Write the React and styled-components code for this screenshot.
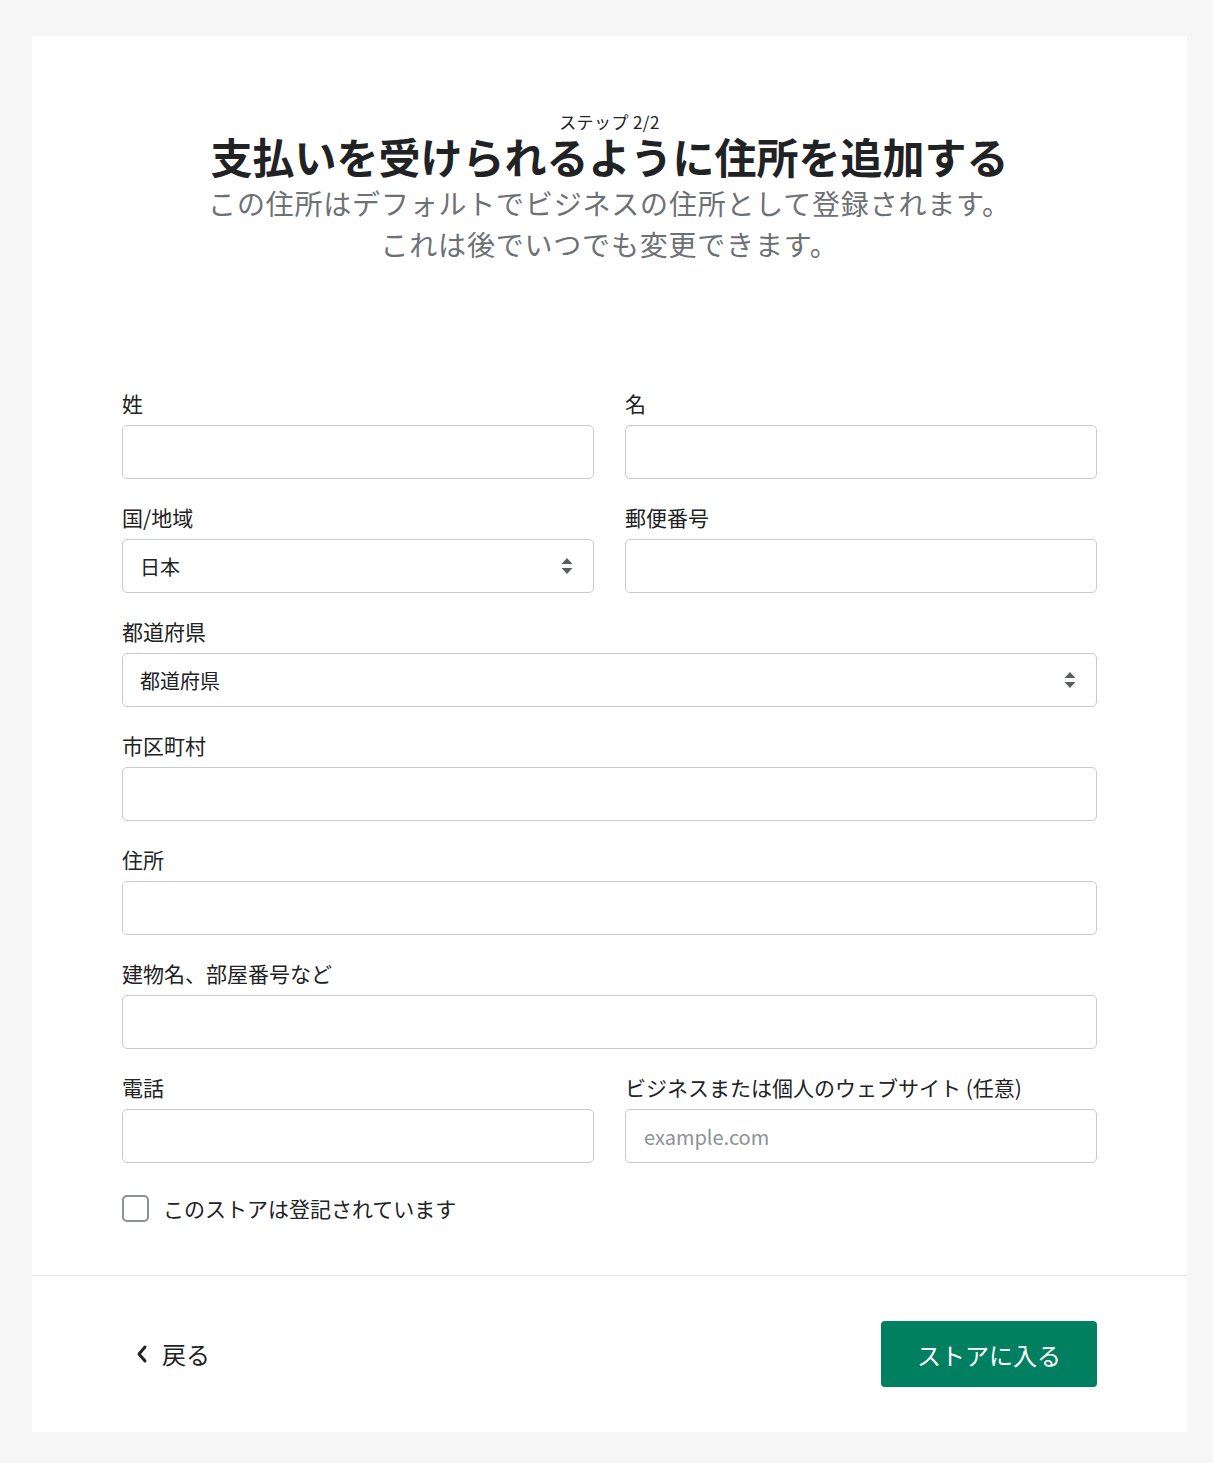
import React from "react";
import styled, { createGlobalStyle } from "styled-components";

const GlobalStyle = createGlobalStyle`
  html, body { margin: 0; padding: 0; background: #f6f6f7; }
  body {
    font-family: "Noto Sans CJK JP", "Noto Sans", sans-serif;
    color: #202223;
  }
  * { box-sizing: border-box; }
`;

const Page = styled.div`
  padding: 36px 26px 32px 32px;
  min-height: 1463px;
`;

const Card = styled.main`
  background: #ffffff;
  display: flex;
  flex-direction: column;
`;

const Body = styled.section`
  padding: 75px 90px 53px 90px;
  border-bottom: 1px solid #e1e3e5;
`;

const Header = styled.header`
  display: flex;
  flex-direction: column;
  align-items: center;
  text-align: center;
  margin-bottom: 124px;
`;

const Step = styled.div`
  font-size: 17px;
  line-height: 21px;
  color: #202223;
  letter-spacing: 0.4px;
`;

const Title = styled.h1`
  margin: 0;
  font-size: 42px;
  line-height: 48px;
  font-weight: 700;
  color: #202223;
`;

const Subtitle = styled.p`
  margin: 3px 0 0;
  font-size: 28px;
  line-height: 41px;
  letter-spacing: 0.8px;
  color: #6d7175;
`;

const Form = styled.form`
  display: grid;
  grid-template-columns: 1fr 1fr;
  column-gap: 31px;
  row-gap: 24px;
`;

const Field = styled.div`
  display: flex;
  flex-direction: column;
  gap: 8px;
  grid-column: ${(p) => (p.$full ? "1 / -1" : "auto")};
`;

const Label = styled.label`
  font-size: 21px;
  line-height: 28px;
  color: #202223;
`;

const TextInput = styled.input`
  height: 54px;
  width: 100%;
  border: 1px solid #c9cccf;
  border-radius: 5px;
  padding: 0 18px;
  font-family: "Noto Sans CJK JP", "Noto Sans", sans-serif;
  font-size: 20px;
  color: #202223;
  background: #fff;
  outline: none;
  &::placeholder { color: #8c9196; }
`;

const SelectWrap = styled.div`
  position: relative;
  height: 54px;
`;

const Select = styled.select`
  appearance: none;
  -webkit-appearance: none;
  height: 54px;
  width: 100%;
  border: 1px solid #c9cccf;
  border-radius: 5px;
  padding: 0 48px 0 17px;
  font-family: "Noto Sans CJK JP", "Noto Sans", sans-serif;
  font-size: 20px;
  color: #202223;
  background: #fff;
  outline: none;
`;

const SelectIcon = styled.svg`
  position: absolute;
  right: 20px;
  top: 50%;
  transform: translateY(-50%);
  pointer-events: none;
`;

const CheckRow = styled.label`
  display: flex;
  align-items: center;
  gap: 14px;
  margin-top: 31px;
  font-size: 21px;
  line-height: 28px;
  color: #202223;
`;

const CheckBox = styled.span`
  width: 27px;
  height: 27px;
  border: 2px solid #8c9196;
  border-radius: 5px;
  background: #fff;
  flex: none;
`;

const Footer = styled.footer`
  display: flex;
  align-items: center;
  justify-content: space-between;
  padding: 45px 90px;
`;

const BackButton = styled.button`
  display: flex;
  align-items: center;
  gap: 14px;
  border: none;
  background: none;
  padding: 0 0 0 14px;
  font-family: "Noto Sans CJK JP", "Noto Sans", sans-serif;
  font-size: 24px;
  line-height: 32px;
  color: #202223;
  cursor: pointer;
`;

const PrimaryButton = styled.button`
  width: 216px;
  height: 66px;
  border: none;
  border-radius: 4px;
  background: #008060;
  color: #ffffff;
  font-family: "Noto Sans CJK JP", "Noto Sans", sans-serif;
  font-size: 24px;
  box-shadow: 0 1px 0 rgba(0, 0, 0, 0.08);
  cursor: pointer;
`;

function Arrows() {
  return (
    <SelectIcon width="14" height="18" viewBox="0 0 14 18" aria-hidden="true">
      <path d="M7 1 L12.5 7 H1.5 Z" fill="#5c5f62" />
      <path d="M7 17 L12.5 11 H1.5 Z" fill="#5c5f62" />
    </SelectIcon>
  );
}

function TextField({ label, full, placeholder }) {
  return (
    <Field $full={full}>
      <Label>{label}</Label>
      <TextInput type="text" placeholder={placeholder} />
    </Field>
  );
}

function SelectField({ label, full, value }) {
  return (
    <Field $full={full}>
      <Label>{label}</Label>
      <SelectWrap>
        <Select defaultValue={value}>
          <option value={value}>{value}</option>
        </Select>
        <Arrows />
      </SelectWrap>
    </Field>
  );
}

export default function App() {
  return (
    <>
      <GlobalStyle />
      <Page>
        <Card>
          <Body>
            <Header>
              <Step>ステップ 2/2</Step>
              <Title>支払いを受けられるように住所を追加する</Title>
              <Subtitle>
                この住所はデフォルトでビジネスの住所として登録されます。
                <br />
                これは後でいつでも変更できます。
              </Subtitle>
            </Header>
            <Form onSubmit={(e) => e.preventDefault()}>
              <TextField label="姓" />
              <TextField label="名" />
              <SelectField label="国/地域" value="日本" />
              <TextField label="郵便番号" />
              <SelectField label="都道府県" value="都道府県" full />
              <TextField label="市区町村" full />
              <TextField label="住所" full />
              <TextField label="建物名、部屋番号など" full />
              <TextField label="電話" />
              <TextField
                label="ビジネスまたは個人のウェブサイト (任意)"
                placeholder="example.com"
              />
            </Form>
            <CheckRow>
              <CheckBox />
              このストアは登記されています
            </CheckRow>
          </Body>
          <Footer>
            <BackButton type="button">
              <svg width="12" height="20" viewBox="0 0 12 20" aria-hidden="true">
                <path
                  d="M9 3 L3 10 L9 17"
                  fill="none"
                  stroke="#202223"
                  strokeWidth="3"
                  strokeLinecap="round"
                  strokeLinejoin="round"
                />
              </svg>
              戻る
            </BackButton>
            <PrimaryButton type="button">ストアに入る</PrimaryButton>
          </Footer>
        </Card>
      </Page>
    </>
  );
}
